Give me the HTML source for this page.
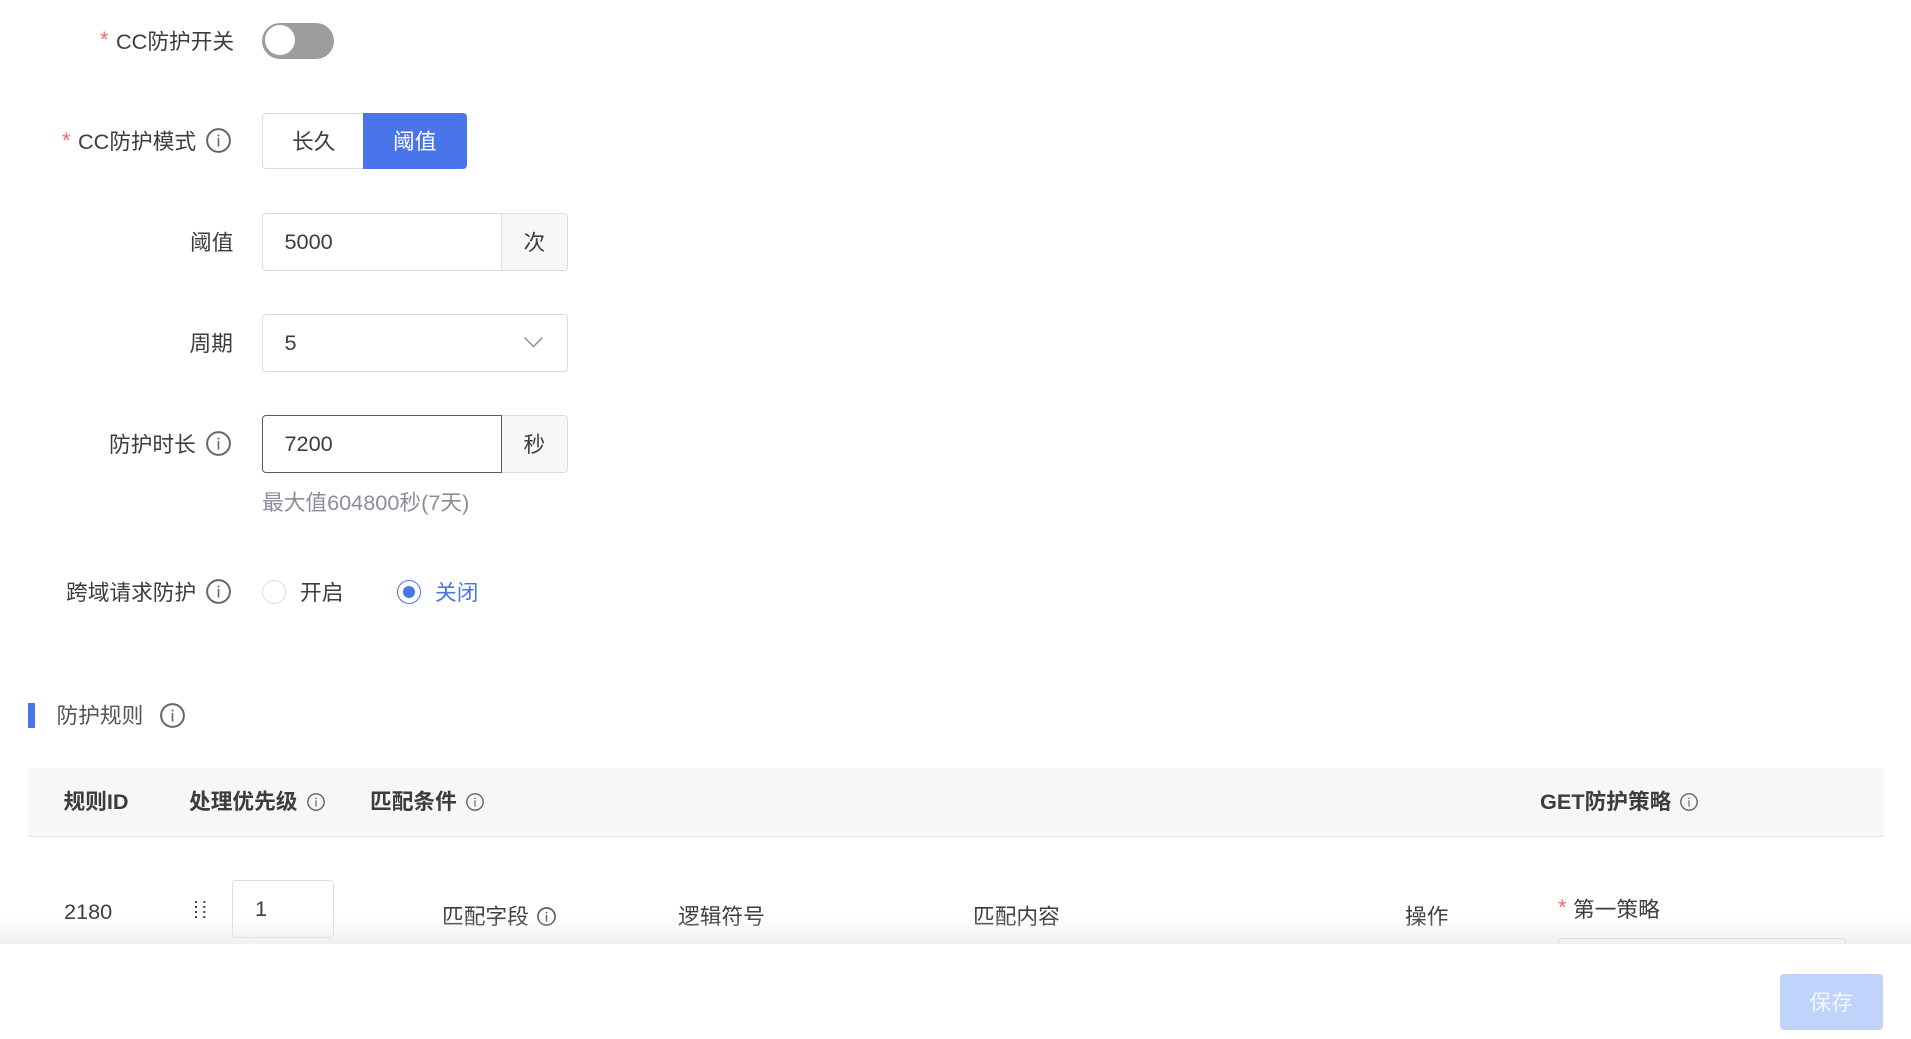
<!DOCTYPE html>
<html lang="zh-CN"><head><meta charset="utf-8"><title>CC防护</title>
<style>
html,body{margin:0;padding:0;background:#fff}
body{width:1911px;height:1039px;position:relative;overflow:hidden;font-family:"Liberation Sans","Noto Sans CJK SC",sans-serif;font-size:21.7px;color:#3d3d3d}
.t{position:absolute;line-height:30px;height:30px;white-space:nowrap;filter:blur(.3px)}
.box{position:absolute;box-sizing:border-box;background:#fff;border:1.5px solid #dcdcdc}
.red{color:#f46a6a;font-size:22px}
svg.i{position:absolute;overflow:visible}
b{font-weight:700}
</style></head><body>

<span class="t red" style="left:100px;top:25px">*</span>
<span class="t" style="left:116px;top:26.5px">CC防护开关</span>
<div style="position:absolute;left:262px;top:23px;width:72px;height:36px;border-radius:18px;background:#9c9c9c"></div>
<div style="position:absolute;left:265px;top:25px;width:30px;height:30px;border-radius:50%;background:#fff"></div>

<span class="t red" style="left:62px;top:126px">*</span>
<span class="t" style="left:78px;top:126.5px">CC防护模式</span>
<svg class="i" style="left:206px;top:128px" width="25" height="25" viewBox="0 0 25 25"><circle cx="12.5" cy="12.5" r="11.4" fill="none" stroke="#666" stroke-width="2"/><circle cx="12.5" cy="7.5" r="1" fill="#666"/><path d="M12.5 10v8.5" stroke="#666" stroke-width="1.6"/></svg>
<div class="box" style="left:262px;top:113px;width:102px;height:56px;border-radius:4px 0 0 4px;border-right:0"></div>
<div style="position:absolute;left:363px;top:113px;width:104px;height:56px;border-radius:0 4px 4px 0;background:#4a74ea"></div>
<span class="t" style="left:292px;top:126.5px">长久</span>
<span class="t" style="left:393px;top:126.5px;color:#fff">阈值</span>

<span class="t" style="left:190px;top:227.5px">阈值</span>
<div class="box" style="left:262px;top:213px;width:306px;height:58px;border-radius:4px"></div>
<div class="box" style="left:501px;top:213px;width:67px;height:58px;border-radius:0 4px 4px 0;background:#f6f7f9"></div>
<span class="t" style="left:284.5px;top:226.5px">5000</span>
<span class="t" style="left:523.5px;top:227.5px">次</span>

<span class="t" style="left:189.5px;top:328.5px">周期</span>
<div class="box" style="left:262px;top:314px;width:306px;height:58px;border-radius:4px"></div>
<span class="t" style="left:284.5px;top:327.5px">5</span>
<svg class="i" style="left:523px;top:335px" width="21" height="14" viewBox="0 0 21 14"><path d="M1.5 2.5L10.5 11.5L19.5 2.5" fill="none" stroke="#8f8f8f" stroke-width="1.5"/></svg>

<span class="t" style="left:109px;top:429.5px">防护时长</span>
<svg class="i" style="left:206px;top:431px" width="25" height="25" viewBox="0 0 25 25"><circle cx="12.5" cy="12.5" r="11.4" fill="none" stroke="#666" stroke-width="2"/><circle cx="12.5" cy="7.5" r="1" fill="#666"/><path d="M12.5 10v8.5" stroke="#666" stroke-width="1.6"/></svg>
<div class="box" style="left:501px;top:415px;width:67px;height:58px;border-radius:0 4px 4px 0;background:#f6f7f9"></div>
<div class="box" style="left:262px;top:415px;width:240px;height:58px;border-radius:4px 0 0 4px;border-color:#5a5a5a"></div>
<span class="t" style="left:284.5px;top:428.5px">7200</span>
<span class="t" style="left:523.5px;top:429.5px">秒</span>
<span class="t" style="left:262px;top:488px;color:#8a8e99">最大值604800秒(7天)</span>

<span class="t" style="left:66px;top:577.5px">跨域请求防护</span>
<svg class="i" style="left:206px;top:579px" width="25" height="25" viewBox="0 0 25 25"><circle cx="12.5" cy="12.5" r="11.4" fill="none" stroke="#666" stroke-width="2"/><circle cx="12.5" cy="7.5" r="1" fill="#666"/><path d="M12.5 10v8.5" stroke="#666" stroke-width="1.6"/></svg>
<div style="position:absolute;left:262px;top:580px;width:24px;height:24px;box-sizing:border-box;border:1.5px solid #dcdcdc;border-radius:50%"></div>
<span class="t" style="left:300px;top:577.5px">开启</span>
<div style="position:absolute;left:397px;top:580px;width:24px;height:24px;box-sizing:border-box;border:1.5px solid #4a74ea;border-radius:50%"></div>
<div style="position:absolute;left:403px;top:586px;width:12px;height:12px;border-radius:50%;background:#4a74ea"></div>
<span class="t" style="left:435px;top:577.5px;color:#4a74ea">关闭</span>

<div style="position:absolute;left:28px;top:703px;width:7px;height:25px;background:#4a74ea"></div>
<span class="t" style="left:56.5px;top:700.5px;color:#555">防护规则</span>
<svg class="i" style="left:160px;top:703px" width="25" height="25" viewBox="0 0 25 25"><circle cx="12.5" cy="12.5" r="11.4" fill="none" stroke="#666" stroke-width="2"/><circle cx="12.5" cy="7.5" r="1" fill="#666"/><path d="M12.5 10v8.5" stroke="#666" stroke-width="1.6"/></svg>

<div style="position:absolute;left:28px;top:768px;width:1856px;height:69px;box-sizing:border-box;background:#f6f7f9;border-bottom:1.5px solid #e2e5ec"></div>
<b class="t" style="left:63.5px;top:787px">规则ID</b>
<b class="t" style="left:189px;top:787px">处理优先级</b>
<svg class="i" style="left:307px;top:793px" width="18" height="18" viewBox="0 0 18 18"><circle cx="9" cy="9" r="8.2" fill="none" stroke="#666" stroke-width="1.4"/><circle cx="9" cy="5.3" r=".8" fill="#666"/><path d="M9 7.3v6.2" stroke="#666" stroke-width="1.2"/></svg>
<b class="t" style="left:370px;top:787px">匹配条件</b>
<svg class="i" style="left:466px;top:793px" width="18" height="18" viewBox="0 0 18 18"><circle cx="9" cy="9" r="8.2" fill="none" stroke="#666" stroke-width="1.4"/><circle cx="9" cy="5.3" r=".8" fill="#666"/><path d="M9 7.3v6.2" stroke="#666" stroke-width="1.2"/></svg>
<b class="t" style="left:1540px;top:787px">GET防护策略</b>
<svg class="i" style="left:1680px;top:793px" width="18" height="18" viewBox="0 0 18 18"><circle cx="9" cy="9" r="8.2" fill="none" stroke="#666" stroke-width="1.4"/><circle cx="9" cy="5.3" r=".8" fill="#666"/><path d="M9 7.3v6.2" stroke="#666" stroke-width="1.2"/></svg>

<span class="t" style="left:64px;top:896.5px">2180</span>
<svg class="i" style="left:194px;top:900px" width="12" height="20" viewBox="0 0 12 20" fill="#444"><rect x="1" y="1" width="2" height="2"/><rect x="9.3" y="1" width="2" height="2"/><rect x="1" y="6" width="2" height="2"/><rect x="9.3" y="6" width="2" height="2"/><rect x="1" y="11" width="2" height="2"/><rect x="9.3" y="11" width="2" height="2"/><rect x="1" y="16" width="2" height="2"/><rect x="9.3" y="16" width="2" height="2"/></svg>
<div class="box" style="left:232px;top:880px;width:102px;height:58px;border-radius:4px"></div>
<span class="t" style="left:255px;top:893.5px">1</span>
<span class="t" style="left:442px;top:901.5px">匹配字段</span>
<svg class="i" style="left:537px;top:907px" width="19" height="19" viewBox="0 0 19 19"><circle cx="9.5" cy="9.5" r="8.6" fill="none" stroke="#555" stroke-width="1.6"/><circle cx="9.5" cy="5.6" r=".9" fill="#555"/><path d="M9.5 7.8v6.7" stroke="#555" stroke-width="1.4"/></svg>
<span class="t" style="left:678px;top:901.5px">逻辑符号</span>
<span class="t" style="left:973px;top:901.5px">匹配内容</span>
<span class="t" style="left:1405px;top:901.5px">操作</span>
<span class="t red" style="left:1558px;top:893px">*</span>
<span class="t" style="left:1573px;top:894.5px">第一策略</span>

<div style="position:absolute;left:0;top:916px;width:1911px;height:28px;background:linear-gradient(to bottom,rgba(232,234,238,0),rgba(232,234,238,.7))"></div>
<div class="box" style="left:1558px;top:938px;width:288px;height:40px;border-radius:4px;background:transparent"></div>
<div style="position:absolute;left:0;top:944px;width:1911px;height:95px;background:#fff"></div>
<div style="position:absolute;left:1780px;top:974px;width:103px;height:56px;border-radius:4px;background:#bfd3fb"></div>
<span class="t" style="left:1809.5px;top:987.5px;color:#f2f6ff">保存</span>
</body></html>
